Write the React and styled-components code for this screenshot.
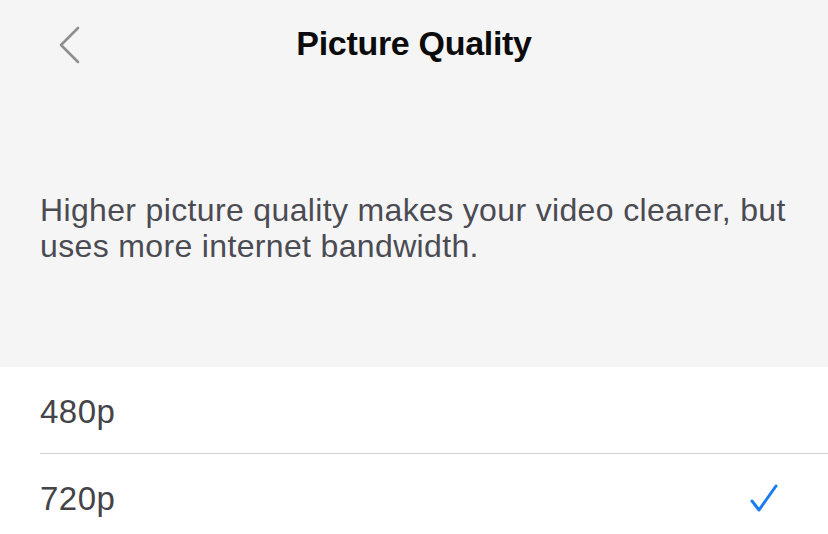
import React from "react";
import styled, { createGlobalStyle } from "styled-components";

const GlobalStyle = createGlobalStyle`
	html, body {
		margin: 0;
		padding: 0;
		background: #f5f5f6;
	}
	body {
		font-family: "Liberation Sans", "Noto Sans", Arial, sans-serif;
		-webkit-font-smoothing: antialiased;
	}
`;

const Screen = styled.div`
	width: 828px;
	height: 534px;
	display: flex;
	flex-direction: column;
	background: #f5f5f6;
	overflow: hidden;
`;

const NavBar = styled.div`
	height: 88px;
	display: flex;
	align-items: center;
	justify-content: center;
	position: relative;
`;

const BackButton = styled.button`
	position: absolute;
	left: 49px;
	top: 22px;
	width: 40px;
	height: 46px;
	border: none;
	background: none;
	padding: 0;
	display: flex;
	align-items: center;
	justify-content: center;
`;

const Title = styled.h1`
	margin: 0;
	margin-top: -2px;
	font-size: 34px;
	font-weight: 700;
	color: #0b0b0c;
	letter-spacing: -0.3px;
`;

const Description = styled.p`
	margin: 104px 0 0 40px;
	width: 780px;
	font-size: 32px;
	line-height: 36px;
	color: #4b4b52;
	letter-spacing: 0.35px;
`;

const List = styled.div`
	margin-top: auto;
	height: 167px;
	background: #ffffff;
	display: flex;
	flex-direction: column;
`;

const Row = styled.div`
	height: 87px;
	padding: 0 49px 0 40px;
	display: flex;
	align-items: center;
	justify-content: space-between;
	box-sizing: border-box;
	position: relative;
	flex-shrink: 0;
	&:not(:last-child)::after {
		content: "";
		position: absolute;
		left: 40px;
		right: 0;
		bottom: 0;
		height: 1px;
		background: #cfcfd3;
	}
`;

const Label = styled.span`
	font-size: 33px;
	color: #444448;
	letter-spacing: 0.5px;
	margin-top: 2px;
`;

const Check = () => (
	<svg width="30" height="32" viewBox="0 0 30 32">
		<path
			d="M3 19 L10 28 L27 4"
			fill="none"
			stroke="#1b7cf2"
			strokeWidth="3"
			strokeLinecap="round"
			strokeLinejoin="round"
		/>
	</svg>
);

const options = [
	{ label: "480p", selected: false },
	{ label: "720p", selected: true }
];

export default function App() {
	return (
		<Screen>
			<GlobalStyle />
			<NavBar>
				<BackButton aria-label="Back">
					<svg width="26" height="40" viewBox="0 0 26 40">
						<path
							d="M22 3 L5 20 L22 37"
							fill="none"
							stroke="#8e8e93"
							strokeWidth="2.6"
							strokeLinecap="round"
							strokeLinejoin="round"
						/>
					</svg>
				</BackButton>
				<Title>Picture Quality</Title>
			</NavBar>
			<Description>
				Higher picture quality makes your video clearer, but uses more internet
				bandwidth.
			</Description>
			<List>
				{options.map((o) => (
					<Row key={o.label}>
						<Label>{o.label}</Label>
						{o.selected && <Check />}
					</Row>
				))}
			</List>
		</Screen>
	);
}
